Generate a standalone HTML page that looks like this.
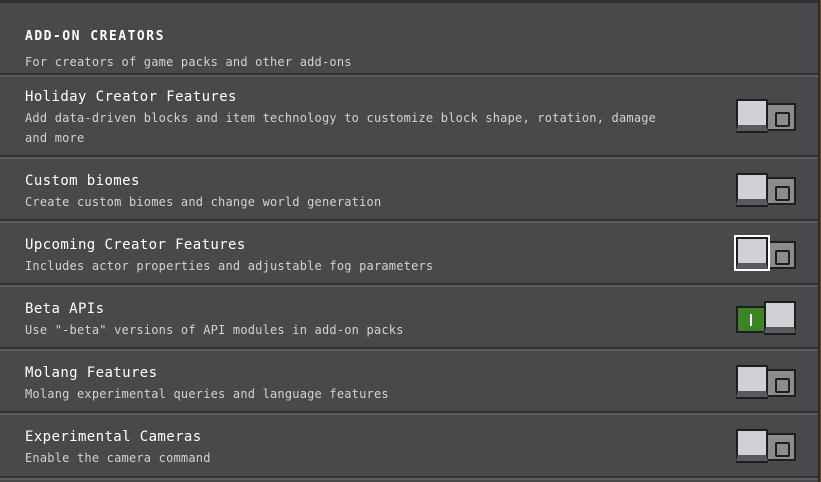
<!DOCTYPE html>
<html><head><style>
*{box-sizing:border-box;}
body{margin:0;width:821px;height:482px;background:#7a4a2a;overflow:hidden;font-family:"DejaVu Sans Mono","Liberation Mono",monospace;}
#p{position:absolute;left:0;top:0;width:820px;height:482px;background:#48494b;border-right:2px solid #2a2a2c;}
.top{position:absolute;left:0;top:0;width:818px;height:3px;background:#313133;}
.sep{position:absolute;left:0;width:818px;height:4px;background:#333335;border-bottom:2px solid #5b5b5d;}
.t{position:absolute;left:25px;color:#fff;font-size:14px;letter-spacing:0.4px;}
.d{position:absolute;left:25px;color:#d2d2d2;font-size:12px;line-height:20px;letter-spacing:0.2px;}
.h{position:absolute;left:25px;top:29px;color:#fff;font-size:13px;font-weight:bold;letter-spacing:1.5px;}
.tr{position:absolute;left:766px;width:30px;height:28px;background:#8c8c8e;border:2px solid #1e1e1f;}
.tr:after{content:"";position:absolute;left:7px;top:7px;width:11px;height:11px;border:2px solid #1e1e1f;border-radius:2px;}
.kn{position:absolute;left:736px;width:32px;height:32px;background:#d0d1d4;border:2px solid #1e1e1f;border-bottom:6px solid #5a5a5c;box-shadow:0 2px 0 #1e1e1f;}
.sel{outline:2px solid #fff;}
.on{position:absolute;left:736px;width:30px;height:27px;background:#3c8527;border:2px solid #1e1e1f;}
.on:after{content:"";position:absolute;left:12px;top:6px;width:2px;height:12px;background:#fff;}
</style></head><body>
<div id="p">
<div class="top"></div>
<div class="h">ADD-ON CREATORS</div>
<div class="d" style="top:52px">For creators of game packs and other add-ons</div>
<div class="sep" style="top:73px"></div>
<div class="t" style="top:89px">Holiday Creator Features</div>
<div class="d" style="top:108px">Add data-driven blocks and item technology to customize block shape, rotation, damage<br>and more</div>
<div class="sep" style="top:155px"></div>
<div class="t" style="top:173px">Custom biomes</div>
<div class="d" style="top:192px">Create custom biomes and change world generation</div>
<div class="sep" style="top:219px"></div>
<div class="t" style="top:237px">Upcoming Creator Features</div>
<div class="d" style="top:256px">Includes actor properties and adjustable fog parameters</div>
<div class="sep" style="top:283px"></div>
<div class="t" style="top:301px">Beta APIs</div>
<div class="d" style="top:320px">Use "-beta" versions of API modules in add-on packs</div>
<div class="sep" style="top:347px"></div>
<div class="t" style="top:365px">Molang Features</div>
<div class="d" style="top:384px">Molang experimental queries and language features</div>
<div class="sep" style="top:411px"></div>
<div class="t" style="top:429px">Experimental Cameras</div>
<div class="d" style="top:448px">Enable the camera command</div>
<div class="sep" style="top:476px"></div>

<div class="tr" style="top:103px"></div><div class="kn" style="top:99px"></div>
<div class="tr" style="top:177px"></div><div class="kn" style="top:173px"></div>
<div class="tr" style="top:241px"></div><div class="kn sel" style="top:237px"></div>
<div class="on" style="top:306px"></div><div class="kn" style="top:301px;left:764px"></div>
<div class="tr" style="top:369px"></div><div class="kn" style="top:365px"></div>
<div class="tr" style="top:433px"></div><div class="kn" style="top:429px"></div>
</div>
</body></html>
